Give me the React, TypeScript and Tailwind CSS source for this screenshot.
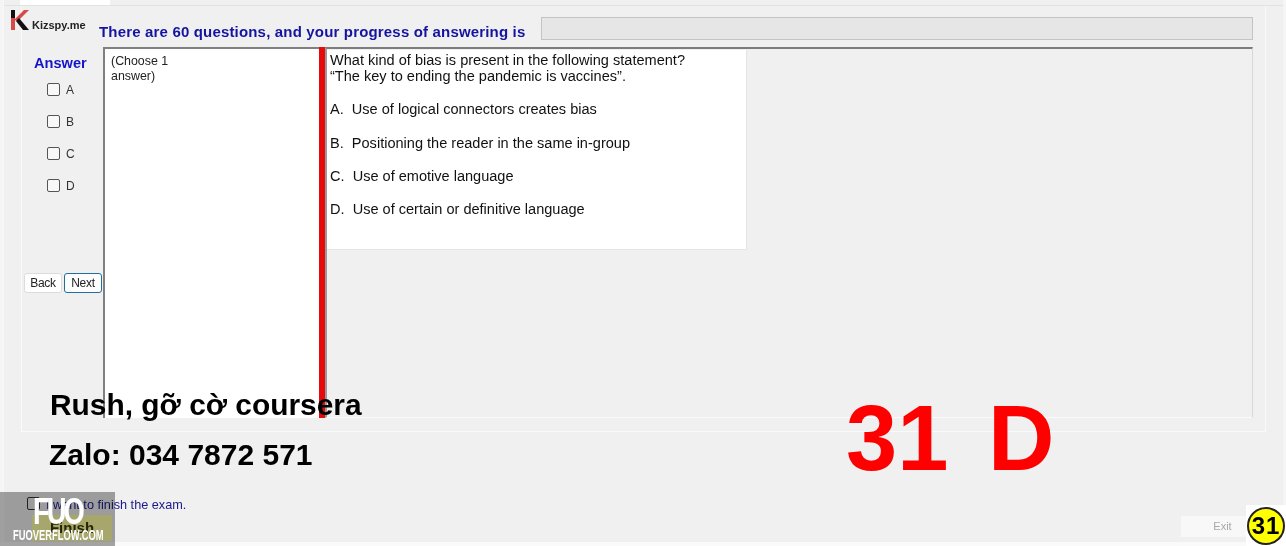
const sans = { fontFamily: '"Liberation Sans", Arial, sans-serif' };

function Check({ label }: { label: string }) {
  return (
    <div className="flex items-center h-[13px] pl-[25px] gap-[6px]">
      <span className="w-[13px] h-[13px] rounded-[2px] border border-[#555555] bg-[#f8f8f8]" />
      <span className="text-[12px] leading-none text-[#333333]">{label}</span>
    </div>
  );
}

export default function App() {
  return (
    <div style={sans} className="relative w-[1286px] h-[546px] overflow-hidden bg-[#f5f5f5] text-black">
      <div className="ml-[3px] w-[1280px] h-[542px] bg-[#f0f0f0] border-l border-[#f8f8f8]">
        <div className="h-[6px] border-b border-[#e2e2e2] pl-[16px]">
          <div className="w-[90px] h-[5px] bg-white" />
        </div>
        <div className="ml-[17px] w-[1245px] h-[426px] border border-t-0 border-[#fafafa] flex flex-col">
          <div className="h-[41px] flex items-end">
            <span className="w-[77px] shrink-0" />
            <span className="font-bold text-[15px] leading-[17px] mb-[7px] text-[#1414a0] whitespace-nowrap tracking-[0.17px]">
              There are 60 questions, and your progress of answering is
            </span>
            <div className="ml-[16px] mb-[7px] w-[712px] h-[23px] bg-[#e6e6e6] border border-[#c4c4c4]" />
          </div>
          <div className="flex h-[371px]">
            <div className="w-[81px] shrink-0 flex flex-col">
              <div className="mt-[8px] ml-[12px] font-bold text-[14.6px] leading-4 text-[#1414c8]">Answer</div>
              <div className="mt-[12px] flex flex-col gap-[19px]">
                <Check label="A" />
                <Check label="B" />
                <Check label="C" />
                <Check label="D" />
              </div>
              <div className="mt-[81px] ml-[2px] flex gap-[2px]">
                <button className="w-[38px] h-[20px] rounded-[3px] border border-[#dcdcdc] bg-white text-[12px] tracking-[-0.3px] leading-none text-[#222222]">Back</button>
                <button className="w-[38px] h-[20px] rounded-[3px] border border-[#1f6f9f] bg-[#fdfdfd] text-[12px] tracking-[-0.3px] leading-none text-[#222222]">Next</button>
              </div>
            </div>
            <div className="w-[216px] shrink-0 bg-white border-2 border-b-0 border-r-0 border-[#808080] pl-[6px] pt-[5px] text-[12.4px] leading-[15px] text-[#222222]">
              (Choose 1<br />answer)
            </div>
            <div className="w-[6px] shrink-0 bg-[#e60a0a]" />
            <div className="w-[928px] shrink-0 border-t-2 border-t-[#7c7c7c] border-l-2 border-l-[#9a9a9a] border-r border-r-[#d8d8d8] border-b border-b-[#fafafa] pt-px">
              <div className="w-[420px] h-[200px] bg-white border-r border-b border-[#e4e4e4] text-[14.55px] leading-[16px] text-[#111111] pl-[3px] pt-[2px]">
                <p>What kind of bias is present in the following statement?</p>
                <p>“The key to ending the pandemic is vaccines”.</p>
                <p className="mt-[17px]">A.&nbsp; Use of logical connectors creates bias</p>
                <p className="mt-[18px]">B.&nbsp; Positioning the reader in the same in-group</p>
                <p className="mt-[17px]">C.&nbsp; Use of emotive language</p>
                <p className="mt-[17px]">D.&nbsp; Use of certain or definitive language</p>
              </div>
            </div>
          </div>
        </div>
        <div className="flex items-center mt-[65px] ml-[23px] h-[13px]">
          <span className="w-[13px] h-[13px] rounded-[2px] border border-[#333333]" />
          <span className="ml-[6px] mt-[3px] text-[12.7px] leading-none text-[#1a1a8c]">I want to finish the exam.</span>
        </div>
      </div>
      <div className="absolute left-[32px] top-[515px] w-[80px] h-[26px] bg-[#ffffa8] text-center font-bold text-[15px] leading-[26px] text-[#3a3a00]">Finish</div>
      <div className="absolute left-[1181px] top-[516px] w-[66px] h-[21px] bg-[#f8f8f8] text-center text-[11px] leading-[21px] text-[#a8a8a8] pl-[17px]">Exit</div>
      <div className="absolute left-0 right-0 top-[542px] h-[4px] bg-[#fafafa]" />

      <div className="absolute left-[50px] top-[388px] font-bold text-[29.9px] leading-[34px] whitespace-nowrap text-black">Rush, gỡ cờ coursera</div>
      <div className="absolute left-[49px] top-[438px] font-bold text-[30px] leading-[34px] whitespace-nowrap text-black">Zalo: 034 7872 571</div>
      <div className="absolute left-[846px] top-[392px] font-bold text-[92px] leading-[92px] whitespace-nowrap text-[#ff0000] [word-spacing:14px]">31 D</div>

      <div className="absolute left-0 top-[492px] w-[115px] h-[54px] bg-[#a6a6a6] mix-blend-multiply" />
      <span className="absolute left-[33px] top-[493px] text-[37px] leading-[38px] tracking-[-4px] whitespace-nowrap text-white font-bold origin-left scale-x-[0.74]">FUO</span>
      <span className="absolute left-[13px] top-[528px] font-bold text-[14px] leading-[15px] whitespace-nowrap text-white origin-left scale-x-[0.67]">FUOVERFLOW.COM</span>

      <div className="absolute left-[1246px] top-[505px] w-[40px] h-[41px] bg-white" />
      <div className="absolute left-[1247px] top-[507px] w-[38px] h-[38px] rounded-full bg-[#ffff00] border-2 border-[#222222] text-center font-bold text-[24px] leading-[34px] tracking-[1px] text-black">31</div>

      <svg className="absolute left-[10px] top-[9px]" width="20" height="22" viewBox="0 0 20 22">
        <path d="M1 1h4v8H1z" fill="#111111" />
        <path d="M1 9h4v12H1z" fill="#d84a4a" />
        <path d="M4 11 14 1h5L8 12z" fill="#d84a4a" />
        <path d="M6 12l3-3 10 12h-6z" fill="#111111" />
      </svg>
      <span className="absolute left-[32px] top-[19px] font-bold text-[11px] leading-[13px] text-[#222222]">Kizspy.me</span>
    </div>
  );
}
